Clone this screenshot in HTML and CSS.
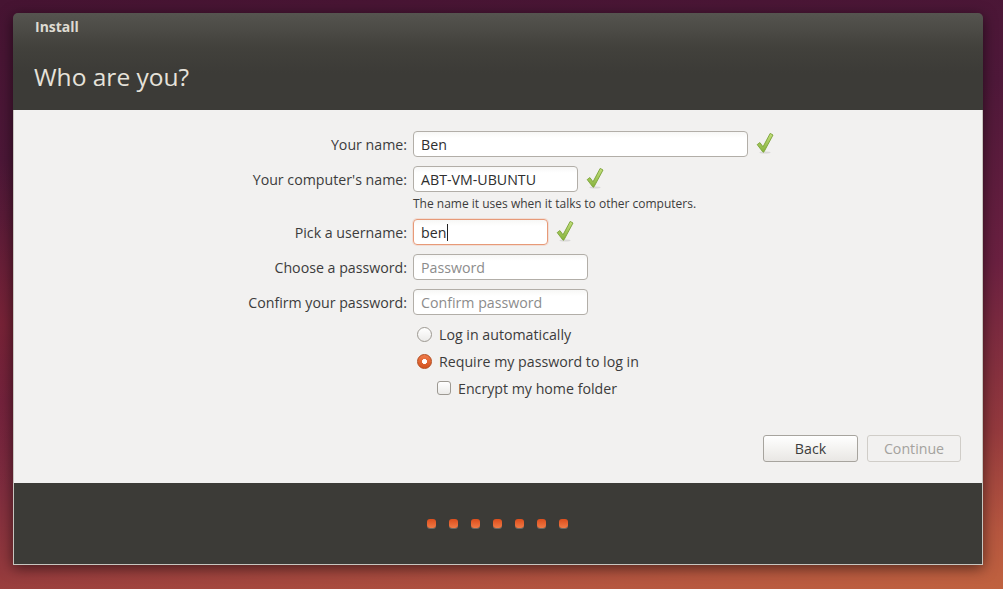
FILE: index.html
```html
<!DOCTYPE html>
<html lang="en">
<head>
<meta charset="utf-8">
<title>Install</title>
<link rel="stylesheet" href="styles.css">
</head>
<body>
<div class="window">
  <header class="header">
    <div class="titlebar">Install</div>
    <h1 class="page-title">Who are you?</h1>
  </header>
  <main class="content">
    <div class="form">
      <div class="row">
        <span class="label">Your name:</span>
        <div class="field w-name">Ben</div>
        <svg class="check" viewBox="0 0 18 22"><use href="#chk"/></svg>
      </div>
      <div class="row">
        <span class="label">Your computer's name:</span>
        <div class="field w-computer">ABT-VM-UBUNTU</div>
        <svg class="check" viewBox="0 0 18 22"><use href="#chk"/></svg>
      </div>
      <div class="hint">The name it uses when it talks to other computers.</div>
      <div class="row">
        <span class="label">Pick a username:</span>
        <div class="field w-user focused">ben<span class="caret"></span></div>
        <svg class="check" viewBox="0 0 18 22"><use href="#chk"/></svg>
      </div>
      <div class="row">
        <span class="label">Choose a password:</span>
        <div class="field w-pass placeholder">Password</div>
      </div>
      <div class="row">
        <span class="label">Confirm your password:</span>
        <div class="field w-pass placeholder">Confirm password</div>
      </div>
      <div class="option radio-row">
        <span class="radio"></span><span>Log in automatically</span>
      </div>
      <div class="option radio-row">
        <span class="radio checked"></span><span>Require my password to log in</span>
      </div>
      <div class="option check-row">
        <span class="checkbox"></span><span>Encrypt my home folder</span>
      </div>
    </div>
    <div class="actions">
      <button class="btn">Back</button>
      <button class="btn disabled" disabled>Continue</button>
    </div>
  </main>
  <footer class="footer">
    <div class="dots">
      <span class="dot"></span><span class="dot"></span><span class="dot"></span><span class="dot"></span><span class="dot"></span><span class="dot"></span><span class="dot"></span>
    </div>
  </footer>
</div>
<svg class="defs" width="0" height="0" aria-hidden="true">
  <defs>
    <linearGradient id="chkg" x1="0" y1="0" x2="0" y2="1">
      <stop offset="0" stop-color="#c4e07c"/>
      <stop offset="1" stop-color="#86b23c"/>
    </linearGradient>
    <g id="chk">
      <ellipse cx="9" cy="20.6" rx="5.5" ry="1" fill="rgba(0,0,0,0.10)"/>
      <path d="M1.2 12.6 L3.9 10.6 L7.0 14.8 L14.2 1.4 L17.0 3.0 L8.0 19.8 Q7.4 20.6 6.7 19.8 Z" fill="url(#chkg)" stroke="#79a235" stroke-width="0.9" stroke-linejoin="round"/>
    </g>
  </defs>
</svg>
</body>
</html>
```
FILE: styles.css
```css
html, body {
  margin: 0;
  padding: 0;
}
body {
  width: 1003px;
  height: 589px;
  overflow: hidden;
  font-family: "Open Sans", "DejaVu Sans", sans-serif;
  background:
    radial-gradient(ellipse 60% 40% at 0% 55%, rgba(140, 40, 50, 0.55), rgba(140, 40, 50, 0) 70%),
    linear-gradient(172deg, #461432 0%, #4e1839 30%, #6a2040 55%, #93393d 78%, #b5563f 92%, #c0623f 100%);
  padding-top: 13px;
  box-sizing: border-box;
}
.defs {
  position: absolute;
  width: 0;
  height: 0;
}
.window {
  margin-left: 13px;
  width: 970px;
  border-radius: 5px 5px 0 0;
  box-shadow: 0 3px 14px rgba(0, 0, 0, 0.55);
  overflow: hidden;
}
.header {
  background: linear-gradient(to bottom, #55544f 0px, #42413c 34px, #3c3b37 60px, #3c3b37 100%);
  color: #dfdbd2;
  padding-bottom: 18px;
}
.titlebar {
  height: 28px;
  line-height: 28px;
  padding-left: 22px;
  font-size: 14px;
  font-weight: 700;
  color: #dfdbd2;
}
.page-title {
  margin: 21px 0 0 0;
  padding-left: 21px;
  font-size: 24.5px;
  font-weight: 400;
  line-height: 30px;
  color: #e6e2da;
}
.content {
  background: #f2f1f0;
  border-left: 1px solid #c8c5bf;
  border-right: 1px solid #c8c5bf;
  height: 373px;
  box-sizing: border-box;
  padding-top: 21px;
  display: flex;
  flex-direction: column;
}
.form {
  padding-left: 193px;
  display: flex;
  flex-direction: column;
}
.row {
  display: flex;
  align-items: center;
  height: 26px;
  margin-bottom: 9px;
}
.label {
  width: 200px;
  text-align: right;
  margin-right: 6px;
  font-size: 14.2px;
  color: #3c3c3c;
}
.field {
  height: 26px;
  box-sizing: border-box;
  border: 1px solid #b2aea8;
  border-radius: 4px;
  background: linear-gradient(to bottom, #f7f7f6 0px, #ffffff 6px, #ffffff 100%);
  padding-left: 7px;
  padding-top: 1px;
  font-size: 14.2px;
  line-height: 23px;
  color: #2e2e2e;
  display: flex;
  align-items: center;
}
.w-name { width: 335px; }
.w-computer { width: 165px; }
.w-user { width: 135px; }
.w-pass { width: 175px; }
.focused {
  border-color: #e79a78;
  box-shadow: 0 0 0 1px rgba(240, 140, 100, 0.18);
}
.caret {
  display: inline-block;
  width: 1px;
  height: 17px;
  background: #222;
  margin-left: 1px;
}
.placeholder {
  color: #8c8c8c;
}
.check {
  width: 18px;
  height: 22px;
  margin-left: 8px;
  margin-top: -2px;
}
.hint {
  margin: -5px 0 8px 206px;
  font-size: 12px;
  line-height: 15px;
  color: #3c3c3c;
}
.option {
  display: flex;
  align-items: center;
  height: 20px;
  margin-bottom: 7px;
  font-size: 14.2px;
  color: #3c3c3c;
}
.radio-row {
  margin-left: 210px;
}
.check-row {
  margin-left: 230px;
}
.radio {
  width: 15px;
  height: 15px;
  box-sizing: border-box;
  border-radius: 50%;
  border: 1px solid #9d9992;
  background: linear-gradient(to bottom, #ffffff, #ecebe9);
  margin-right: 7px;
}
.radio.checked {
  border-color: #b24a1c;
  background: radial-gradient(circle at 50% 50%, #ffffff 0px, #ffffff 2.2px, transparent 2.8px),
    linear-gradient(to bottom, #ef7a4a, #d3531f);
}
.checkbox {
  width: 14px;
  height: 14px;
  box-sizing: border-box;
  border-radius: 3px;
  border: 1px solid #9d9992;
  background: linear-gradient(to bottom, #ffffff, #ecebe9);
  margin-right: 7px;
}
.actions {
  margin-top: auto;
  margin-bottom: 21px;
  padding-right: 21px;
  display: flex;
  justify-content: flex-end;
  gap: 9px;
}
.btn {
  width: 95px;
  height: 27px;
  box-sizing: border-box;
  border: 1px solid #a7a49e;
  border-radius: 3px;
  background: linear-gradient(to bottom, #ffffff 0%, #f4f3f1 50%, #e9e7e4 100%);
  font-family: "Open Sans", "DejaVu Sans", sans-serif;
  font-size: 14.2px;
  color: #3c3c3c;
  padding: 0;
}
.btn.disabled {
  width: 94px;
  border-color: #d0cdc8;
  background: #f2f1f0;
  color: #a4a29e;
}
.footer {
  background: #3c3b37;
  height: 82px;
  border: 1px solid #c8c5bf;
  border-top: none;
  box-sizing: border-box;
  display: flex;
  align-items: center;
  justify-content: center;
}
.dots {
  display: flex;
  gap: 13px;
  margin-left: -1px;
  margin-top: -1px;
}
.dot {
  width: 9px;
  height: 9px;
  border-radius: 3px;
  background: linear-gradient(to bottom, #dd4d1c, #f07a45);
  box-shadow: 0 1px 0 rgba(200, 190, 180, 0.35);
}
```
